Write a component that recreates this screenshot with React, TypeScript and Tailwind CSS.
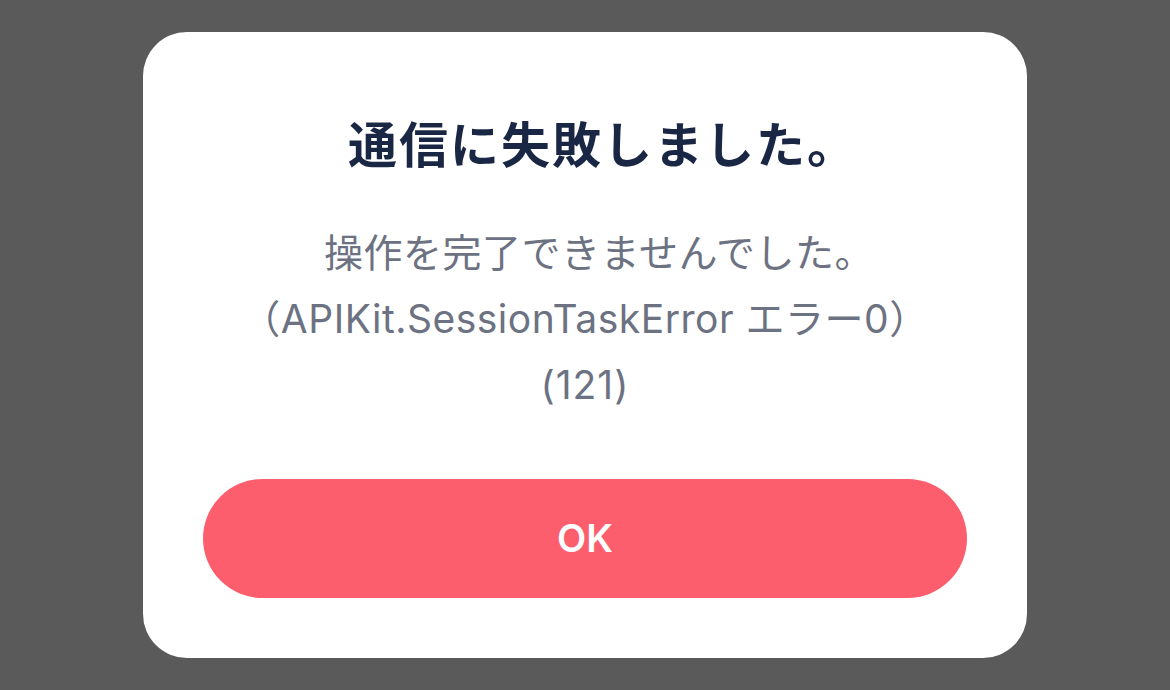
export default function App() {
  return (
    <div className="w-[1170px] h-[690px] bg-[#5a5a5a] flex justify-center pt-[32px] overflow-hidden">
      <div className="w-[884px] h-[626px] bg-white rounded-[44px] flex flex-col items-center pt-[84px] px-[60px] pb-[60px]">
        <div
          className="text-[49px] leading-[60px] font-bold text-[#1a2744] tracking-[2px] pl-[36px]"
          style={{ fontFamily: 'Inter, "Noto Sans CJK JP", sans-serif' }}
        >
          通信に失敗しました。
        </div>
        <div
          className="mt-[44px] text-[39px] leading-[66px] text-[#6c7282] text-center"
          style={{ fontFamily: 'Inter, "Noto Sans CJK JP", sans-serif' }}
        >
          <div className="pl-[28px] tracking-[0.5px]">操作を完了できませんでした。</div>
          <div className="tracking-[0.5px]">（APIKit.SessionTaskError エラー0）</div>
          <div className="tracking-[1px]">(121)</div>
        </div>
        <div className="mt-auto w-full h-[119px] rounded-full bg-[#fc5e6d] flex items-center justify-center">
          <span
            className="text-white text-[38px] font-semibold"
            style={{ fontFamily: 'Inter, "Noto Sans CJK JP", sans-serif' }}
          >
            OK
          </span>
        </div>
      </div>
    </div>
  );
}
